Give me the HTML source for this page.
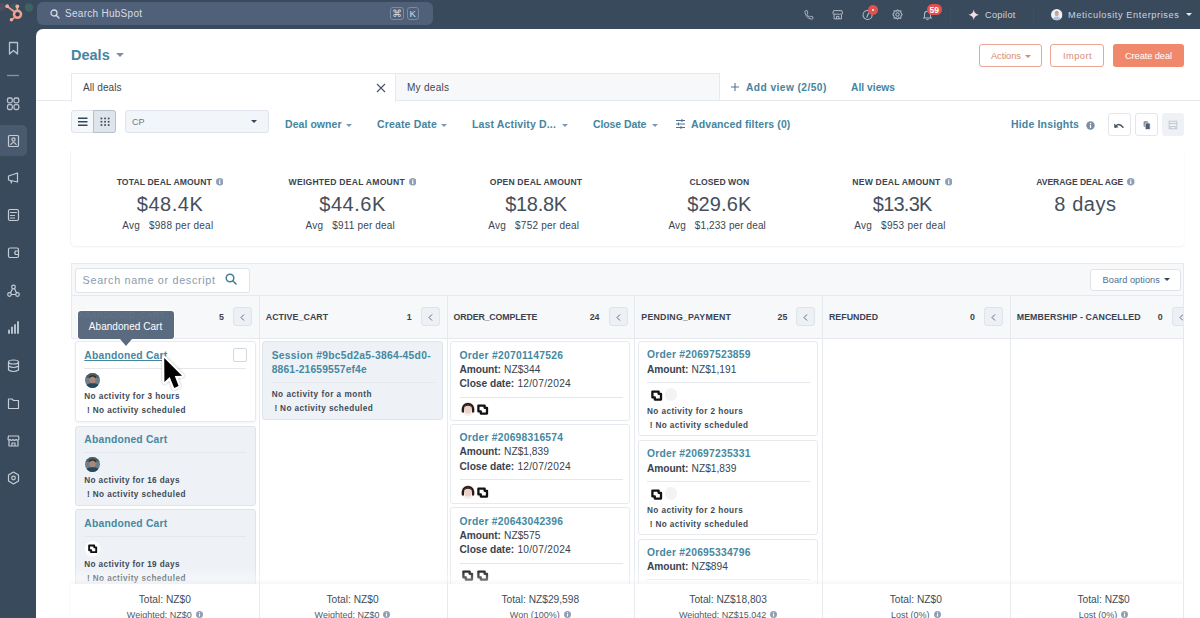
<!DOCTYPE html>
<html><head><meta charset="utf-8">
<style>
*{box-sizing:border-box;margin:0;padding:0}
html,body{width:1200px;height:618px;overflow:hidden}
body{background:#394a5d;font-family:"Liberation Sans",sans-serif;position:relative;color:#33475b}
.a{position:absolute;white-space:nowrap;line-height:1}
.b{position:absolute}
.lk{color:#4585a0;font-weight:bold}
.car{position:absolute;width:0;height:0;border-left:3px solid transparent;border-right:3px solid transparent;border-top:3px solid #7c98b6}
.ico{position:absolute;overflow:visible}
.hdr{font-weight:bold;font-size:8.8px;color:#33475b}
.card{position:absolute;border:1px solid #e3e8ee;border-radius:3px;background:#fff}
.card.g{background:#eef2f7;border-color:#dde4ec}
.ct{color:#3c7d96;font-weight:bold;font-size:10.3px}
.na{font-weight:bold;font-size:8.2px;color:#2e3f50}
.dv{position:absolute;height:1px;background:#dfe5eb}
.ft1{font-size:10.5px;color:#33475b}
.ft2{font-size:8.5px;color:#516f90}
</style></head>
<body>
<!-- ===== TOP BAR ===== -->
<svg class="ico" style="left:0;top:0" width="36" height="29" viewBox="0 0 36 29">
  <circle cx="1.5" cy="7" r="3.8" fill="rgba(160,100,120,0.22)"/><circle cx="14.5" cy="6.5" r="3.6" fill="rgba(90,130,100,0.22)"/><circle cx="29" cy="7.5" r="4.2" fill="rgba(70,130,100,0.45)"/>
  <g fill="none" stroke="#f0a08b" stroke-linecap="round">
    <circle cx="17.5" cy="14.3" r="3.5" stroke-width="2.6"/>
    <line x1="17.3" y1="10.5" x2="17.3" y2="6.5" stroke-width="1.8"/>
    <line x1="14.8" y1="12" x2="7.3" y2="6.5" stroke-width="1.6"/>
    <line x1="15" y1="17" x2="11.7" y2="19.8" stroke-width="1.6"/>
  </g>
  <g fill="#f3ad9a"><circle cx="17.3" cy="6.3" r="1.9"/><circle cx="7.2" cy="6.2" r="1.9"/><circle cx="11.4" cy="19.8" r="1.7"/></g>
  <circle cx="17.5" cy="14.3" r="1.6" fill="#2e3a48"/>
</svg>
<div class="b" style="left:37px;top:2px;width:396px;height:23px;background:#516079;border-radius:6px"></div>
<svg class="ico" style="left:50px;top:9px" width="10" height="10" viewBox="0 0 10 10"><circle cx="4" cy="4" r="3" fill="none" stroke="#d5dce5" stroke-width="1.3"/><line x1="6.2" y1="6.2" x2="9" y2="9" stroke="#d5dce5" stroke-width="1.4" stroke-linecap="round"/></svg>
<div class="a" id="t_search" style="letter-spacing:0.28px;left:65px;top:8.5px;font-size:10px;color:#d5dce5">Search HubSpot</div>
<div class="b" style="left:390px;top:7px;width:14px;height:13px;border:1px solid #7d8ba0;border-radius:3px"></div>
<div class="a" style="left:392px;top:8.5px;font-size:10px;color:#d5dce5">&#8984;</div>
<div class="b" style="left:407px;top:7px;width:12px;height:13px;border:1px solid #7d8ba0;border-radius:3px"></div>
<div class="a" style="left:409.5px;top:9px;font-size:9.5px;color:#d5dce5">K</div>

<!-- right icons -->
<svg class="ico" style="left:803px;top:8.5px" width="11.5" height="11.5" viewBox="0 0 14 14"><path d="M3 2 L5 2 L6 5 L4.6 6.2 Q6 9 8 10 L9.2 8.6 L12 9.6 L12 11.6 Q11.5 12.5 10 12.3 Q3.5 11 2.2 3.5 Q2.3 2.2 3 2Z" fill="none" stroke="#b3bdc8" stroke-width="1.1" stroke-linejoin="round"/></svg>
<svg class="ico" style="left:831.8px;top:8.5px" width="11.5" height="11.5" viewBox="0 0 14 14"><g fill="none" stroke="#b3bdc8" stroke-width="1.2"><path d="M2 2 H12 L13 5.5 Q12 7 10.5 6 Q9 7.2 7 6 Q5 7.2 3.5 6 Q2 7 1 5.5Z"/><path d="M2.5 6.5 V12 H11.5 V6.5"/><path d="M5.5 12 V9 H8.5 V12"/></g></svg>
<svg class="ico" style="left:861.5px;top:8.8px" width="12" height="12" viewBox="0 0 14 14"><circle cx="6.5" cy="7" r="5.3" fill="none" stroke="#b3bdc8" stroke-width="1.2"/><path d="M5.5 10 L8 4" stroke="#b3bdc8" stroke-width="1.3"/></svg>
<div class="b" style="left:868px;top:5px;width:10px;height:10px;border-radius:50%;background:#e2504f"></div>
<div class="b" style="left:871.8px;top:8.8px;width:2.4px;height:2.4px;border-radius:50%;background:#fff"></div>
<svg class="ico" style="left:892px;top:9px" width="11" height="11" viewBox="0 0 13 13"><g fill="none" stroke="#b3bdc8" stroke-width="1.2"><path d="M6.5 1 L8 2.5 L10.4 2.2 L10.6 4.6 L12 6.5 L10.6 8.4 L10.4 10.8 L8 10.5 L6.5 12 L5 10.5 L2.6 10.8 L2.4 8.4 L1 6.5 L2.4 4.6 L2.6 2.2 L5 2.5Z"/><circle cx="6.5" cy="6.5" r="2"/></g></svg>
<svg class="ico" style="left:921.5px;top:8.5px" width="11" height="12" viewBox="0 0 13 14"><g fill="none" stroke="#b3bdc8" stroke-width="1.2"><path d="M2 10.5 H11 L10 9 V6 Q10 2.5 6.5 2.5 Q3 2.5 3 6 V9Z"/><path d="M5.3 12 Q6.5 13.3 7.7 12"/></g></svg>
<div class="b" style="left:927px;top:4px;width:15px;height:11px;border-radius:6px;background:#e2504f"></div>
<div class="a" style="left:929.5px;top:5.5px;font-size:8.5px;color:#fff;font-weight:bold">59</div>
<div class="b" style="left:950px;top:6px;width:1px;height:17px;background:#404f61"></div>
<svg class="ico" style="left:968px;top:9px" width="11.5" height="11.5" viewBox="0 0 13 13"><path d="M6.5 0.5 Q7.2 5.6 12.5 6.5 Q7.2 7.4 6.5 12.5 Q5.8 7.4 0.5 6.5 Q5.8 5.6 6.5 0.5Z" fill="#f6dbe6"/></svg>
<div class="a" id="t_copilot" style="letter-spacing:0.30px;left:985px;top:10.5px;font-size:9.2px;color:#cdd5df">Copilot</div>
<div class="b" style="left:1033px;top:6px;width:1px;height:17px;background:#404f61"></div>
<svg class="ico" style="left:1050.5px;top:8.8px" width="11.5" height="11.5" viewBox="0 0 16 16"><defs><clipPath id="ca"><circle cx="8" cy="8" r="8"/></clipPath></defs><g clip-path="url(#ca)"><rect width="16" height="16" fill="#eef0f2"/><ellipse cx="8" cy="6.8" rx="2.8" ry="3.3" fill="#c9a898"/><path d="M5.2 5.5 Q8 2.8 10.8 5.5 Q10.5 3.2 8 3 Q5.5 3.2 5.2 5.5Z" fill="#8a7466"/><path d="M2.5 16 Q3 10.5 8 10.5 Q13 10.5 13.5 16Z" fill="#a9c4de"/></g></svg>
<div class="a" id="t_meti" style="letter-spacing:0.60px;left:1068px;top:10.5px;font-size:9.2px;color:#cdd5df">Meticulosity Enterprises</div>
<div class="car" style="left:1186px;top:13px;border-top-color:#e6ebf0;border-left-width:3.5px;border-right-width:3.5px;border-top-width:3.5px"></div>

<!-- ===== SIDEBAR ===== -->
<svg class="ico" style="left:0;top:29px" width="36" height="589" viewBox="0 29 36 589">
  <g fill="none" stroke="#b9c3ce" stroke-width="1.3" stroke-linejoin="round">
    <path d="M9.5 42.5 H17.5 V54 L13.5 50.5 L9.5 54Z"/>
    <line x1="7" y1="75.5" x2="19" y2="75.5" stroke="#8693a3"/>
    <rect x="7.5" y="98" width="4.8" height="4.8" rx="1.5"/><rect x="14" y="98" width="4.8" height="4.8" rx="1.5"/>
    <rect x="7.5" y="104.7" width="4.8" height="4.8" rx="1.5"/><rect x="14" y="104.7" width="4.8" height="4.8" rx="1.5"/>
  </g>
</svg>
<div class="b" style="left:0;top:125px;width:27px;height:31px;background:#4a5a6e;border-radius:0 5px 5px 0"></div>
<svg class="ico" style="left:0;top:29px" width="36" height="589" viewBox="0 29 36 589">
  <g fill="none" stroke="#c4ccd6" stroke-width="1.2" stroke-linejoin="round" stroke-linecap="round">
    <rect x="8.5" y="135.5" width="10" height="11" rx="1"/><circle cx="13.5" cy="139.5" r="1.6"/><path d="M10.8 144.5 Q13.5 140.5 16.2 144.5"/>
    <!-- megaphone -->
    <path d="M8.5 176 L17.5 173 V182 L8.5 180Z M10.5 180.5 L11.5 183"/>
    <!-- calc -->
    <rect x="8.5" y="209.5" width="10" height="11" rx="1.5"/><line x1="10.5" y1="212.5" x2="16.5" y2="212.5"/><path d="M10.5 215.5h1.5M13 215.5h1.5M10.5 218h1.5M13 218h1.5"/>
    <!-- wallet -->
    <rect x="8.5" y="248" width="10" height="9.5" rx="1.5"/><path d="M18.5 251 H15.5 Q14 252.8 15.5 254.5 H18.5"/>
    <!-- network -->
    <circle cx="13.5" cy="287" r="1.8"/><circle cx="9.5" cy="294.5" r="1.8"/><circle cx="17.5" cy="294.5" r="1.8"/><path d="M12.5 288.8 L10.5 292.8 M14.5 288.8 L16.5 292.8 M11.5 294.5 H15.5"/>
    <!-- bars -->
    <path d="M9 333 V330.5 M12 333 V327.5 M15 333 V325 M18 333 V322" stroke-width="1.8"/>
    <!-- db -->
    <ellipse cx="13.5" cy="362" rx="5" ry="2"/><path d="M8.5 362 V370 Q13.5 373 18.5 370 V362 M8.5 366 Q13.5 369 18.5 366"/>
    <!-- folder -->
    <path d="M8.5 399 H12 L13.5 400.5 H18.5 V408.5 H8.5Z"/>
    <!-- store -->
    <path d="M8.5 436 H18.5 L19 439 Q17.5 441 16 439.5 Q14.5 441 13 439.5 Q11.5 441 10 439.5 Q8.5 441 8 439Z M9 440.5 V446 H18 V440.5 M12 446 V443 H15 V446"/>
    <!-- gear-ish -->
    <path d="M13.5 472 L18.5 475 V481 L13.5 484 L8.5 481 V475Z"/><circle cx="13.5" cy="478" r="1.8"/>
  </g>
</svg>

<!-- ===== PANEL ===== -->
<div class="b" style="left:36px;top:29px;width:1164px;height:589px;background:#fff;border-top-left-radius:7px"></div>

<!-- Title -->
<div class="a lk" id="t_deals" style="left:71px;top:47.5px;font-size:14.5px">Deals</div>
<div class="car" style="left:116px;top:52.5px;border-left-width:4px;border-right-width:4px;border-top-width:4px;border-top-color:#7f8fa3"></div>

<!-- Buttons -->
<div class="b" style="left:979px;top:43.5px;width:63px;height:23px;border:1px solid #eba594;border-radius:3px"></div>
<div class="a" id="t_actions" style="margin-top:0.8px;letter-spacing:-0.10px;left:991px;top:51px;font-size:9.3px;color:#d98a76">Actions</div>
<div class="car" style="left:1025px;top:54.5px;border-top-color:#d98a76"></div>
<div class="b" style="left:1050px;top:43.5px;width:54px;height:23px;border:1px solid #eba594;border-radius:3px"></div>
<div class="a" id="t_import" style="margin-top:0.8px;letter-spacing:0.44px;left:1063px;top:51px;font-size:9.3px;color:#d98a76">Import</div>
<div class="b" style="left:1113px;top:44px;width:71px;height:22.5px;background:#f0896b;border-radius:3px"></div>
<div class="a" id="t_create" style="margin-top:0.8px;letter-spacing:-0.10px;left:1125px;top:51px;font-size:9.3px;color:#fff">Create deal</div>

<!-- Tabs -->
<div class="b" style="left:71px;top:72.5px;width:325px;height:29px;border:1px solid #e6e9ed;border-bottom:none;background:#fff"></div>
<div class="b" style="left:396px;top:72.5px;width:324px;height:28.5px;border:1px solid #e6e9ed;border-left:none;background:#f6f8fa"></div>
<div class="b" style="left:36px;top:100px;width:35px;height:1px;background:#e6e9ed"></div>
<div class="b" style="left:720px;top:100px;width:480px;height:1px;background:#e6e9ed"></div>
<div class="a" id="t_alldeals" style="letter-spacing:0.10px;left:83px;top:82.5px;font-size:10px;color:#3d4652">All deals</div>
<svg class="ico" style="left:376px;top:82.5px" width="10" height="10" viewBox="0 0 10 10"><path d="M1 1 L9 9 M9 1 L1 9" stroke="#4a5563" stroke-width="1.1"/></svg>
<div class="a" id="t_mydeals" style="letter-spacing:0.28px;left:407px;top:82.5px;font-size:10px;color:#3d4652">My deals</div>
<svg class="ico" style="left:730px;top:81.5px" width="10" height="10" viewBox="0 0 10 10"><path d="M5 1 V9 M1 5 H9" stroke="#5a7390" stroke-width="1.1"/></svg>
<div class="a lk" id="t_addview" style="letter-spacing:0.44px;left:746px;top:82.7px;font-size:10.2px">Add view (2/50)</div>
<div class="a lk" id="t_allviews" style="letter-spacing:0.05px;left:851px;top:82.7px;font-size:10.2px">All views</div>

<!-- Filters row -->
<div class="b" style="left:71px;top:110px;width:45px;height:22.5px;border:1px solid #dfe3eb;border-radius:3px;background:#f5f8fa"></div>
<div class="b" style="left:93px;top:110px;width:23px;height:22.5px;border:1px solid #b5c0cc;border-radius:0 3px 3px 0;background:#dfe5ed"></div>
<svg class="ico" style="left:77px;top:117px" width="12" height="10" viewBox="0 0 12 10"><path d="M1 1.2 H10.5 M1 4.7 H10.5 M1 8.2 H10.5" stroke="#33475b" stroke-width="1.4"/></svg>
<svg class="ico" style="left:99.5px;top:117px" width="12" height="10" viewBox="0 0 12 10"><g fill="#3d4a5a"><rect x="0.6" y="0.6" width="1.7" height="1.7"/><rect x="4.2" y="0.6" width="1.7" height="1.7"/><rect x="7.8" y="0.6" width="1.7" height="1.7"/><rect x="0.6" y="3.9" width="1.7" height="1.7"/><rect x="4.2" y="3.9" width="1.7" height="1.7"/><rect x="7.8" y="3.9" width="1.7" height="1.7"/><rect x="0.6" y="7.2" width="1.7" height="1.7"/><rect x="4.2" y="7.2" width="1.7" height="1.7"/><rect x="7.8" y="7.2" width="1.7" height="1.7"/></g></svg>
<div class="b" style="left:125px;top:110px;width:144px;height:22.5px;border:1px solid #dfe3eb;border-radius:3px;background:#f2f5f9"></div>
<div class="a" id="t_cp" style="left:132px;top:117.5px;font-size:9px;color:#6f7a86">CP</div>
<div class="car" style="left:251px;top:120px;border-top-color:#33475b"></div>

<div class="a lk" id="t_owner" style="letter-spacing:0.06px;left:285px;top:119px;font-size:10.5px">Deal owner</div>
<div class="car" style="left:346px;top:123.5px"></div>
<div class="a lk" id="t_cdate" style="letter-spacing:0.15px;left:377px;top:119px;font-size:10.5px">Create Date</div>
<div class="car" style="left:441px;top:123.5px"></div>
<div class="a lk" id="t_lastact" style="letter-spacing:0.15px;left:472px;top:119px;font-size:10.5px">Last Activity D...</div>
<div class="car" style="left:562px;top:123.5px"></div>
<div class="a lk" id="t_closedate" style="letter-spacing:-0.10px;left:593px;top:119px;font-size:10.5px">Close Date</div>
<div class="car" style="left:652px;top:123.5px"></div>
<svg class="ico" style="left:676px;top:119px" width="9" height="10" viewBox="0 0 9 10"><path d="M0 1.5 H9 M0 5 H9 M0 8.5 H9 M6 0 V3 M2.5 3.5 V6.5 M5 7 V10" stroke="#516f90" stroke-width="1"/></svg>
<div class="a lk" id="t_adv" style="letter-spacing:0.10px;left:691px;top:119px;font-size:10.5px">Advanced filters (0)</div>

<div class="a lk" id="t_hide" style="letter-spacing:0.17px;left:1011px;top:119px;font-size:10.5px">Hide Insights</div>
<svg class="ico" style="left:1086px;top:121px" width="9" height="9" viewBox="0 0 9 9"><circle cx="4.5" cy="4.5" r="4.2" fill="#7c8ea3"/><rect x="3.9" y="3.7" width="1.2" height="3.3" fill="#fff"/><circle cx="4.5" cy="2.5" r="0.7" fill="#fff"/></svg>
<div class="b" style="left:1108px;top:112.5px;width:23px;height:23px;border:1px solid #e3e6ea;border-radius:3px;background:#fff"></div>
<svg class="ico" style="left:1113px;top:121px" width="12" height="9" viewBox="0 0 12 9"><path d="M2.2 5.8 Q5.5 1.2 10 6.2" fill="none" stroke="#4a5566" stroke-width="1.5" stroke-linecap="round"/><path d="M1 2.6 L1.6 7 L5.6 6.3Z" fill="#4a5566"/></svg>
<div class="b" style="left:1135px;top:112.5px;width:23px;height:23px;border:1px solid #e3e6ea;border-radius:3px;background:#fff"></div>
<svg class="ico" style="left:1141px;top:120px" width="11" height="11" viewBox="0 0 11 11"><rect x="2.6" y="1.2" width="4.6" height="5.8" rx="1" fill="#7d8a9a"/><rect x="4.2" y="3" width="5" height="6.6" rx="1" fill="#4e6075" stroke="#fff" stroke-width="0.7"/></svg>
<div class="b" style="left:1162px;top:112.5px;width:22px;height:23px;border-radius:3px;background:#eef1f5"></div>
<svg class="ico" style="left:1168px;top:120px" width="10" height="10" viewBox="0 0 10 10"><path d="M1.2 1.2 H8.8 V8.8 H1.2Z M1.2 3.5 H8.8 M2.8 8.8 V6.5 H7.2 V8.8" fill="none" stroke="#c2cad3" stroke-width="1.1"/></svg>

<!-- ===== INSIGHTS ===== -->
<div class="b" style="left:71px;top:150px;width:1113px;height:96px;border-radius:4px;background:#fff;box-shadow:0 1px 2px rgba(45,62,80,0.07), -1px 0 1px rgba(45,62,80,0.04)"></div>
<div class="a" style="left:20.0px;top:178.02px;width:300px;text-align:center;font-size:8.6px;font-weight:bold;color:#3b4450"><span id="ins_l0" style="letter-spacing:0.124px;">TOTAL DEAL AMOUNT</span><span style="display:inline-block;width:4px"></span><svg width="7.5" height="7.5" viewBox="0 0 9 9" style="vertical-align:-0.5px"><circle cx="4.5" cy="4.5" r="4.5" fill="#8fa0b4"/><rect x="3.8" y="3.7" width="1.4" height="3.5" fill="#fff"/><circle cx="4.5" cy="2.3" r="0.85" fill="#fff"/></svg><span></span></div>
<div class="a" style="left:20.0px;top:194.37px;width:300px;text-align:center;font-size:20px;font-weight:normal;color:#454f5b"><span id="ins_v0" style="letter-spacing:0.522px;">$48.4K</span></div>
<div class="a" style="left:17.8px;top:221.13px;width:300px;text-align:center;font-size:10px;font-weight:normal;color:#3a4653"><span id="ins_a0" style="letter-spacing:0.251px;">Avg<span style="display:inline-block;width:9px"></span>$988 per deal</span></div>
<div class="a" style="left:202.5px;top:178.02px;width:300px;text-align:center;font-size:8.6px;font-weight:bold;color:#3b4450"><span id="ins_l1" style="letter-spacing:0.231px;">WEIGHTED DEAL AMOUNT</span><span style="display:inline-block;width:4px"></span><svg width="7.5" height="7.5" viewBox="0 0 9 9" style="vertical-align:-0.5px"><circle cx="4.5" cy="4.5" r="4.5" fill="#8fa0b4"/><rect x="3.8" y="3.7" width="1.4" height="3.5" fill="#fff"/><circle cx="4.5" cy="2.3" r="0.85" fill="#fff"/></svg><span></span></div>
<div class="a" style="left:202.5px;top:194.37px;width:300px;text-align:center;font-size:20px;font-weight:normal;color:#454f5b"><span id="ins_v1" style="letter-spacing:0.522px;">$44.6K</span></div>
<div class="a" style="left:200.3px;top:221.13px;width:300px;text-align:center;font-size:10px;font-weight:normal;color:#3a4653"><span id="ins_a1" style="letter-spacing:0.181px;">Avg<span style="display:inline-block;width:9px"></span>$911 per deal</span></div>
<div class="a" style="left:386.0px;top:178.02px;width:300px;text-align:center;font-size:8.6px;font-weight:bold;color:#3b4450"><span id="ins_l2" style="letter-spacing:0.162px;">OPEN DEAL AMOUNT</span></div>
<div class="a" style="left:386.0px;top:194.37px;width:300px;text-align:center;font-size:20px;font-weight:normal;color:#454f5b"><span id="ins_v2" style="letter-spacing:-0.278px;">$18.8K</span></div>
<div class="a" style="left:383.8px;top:221.13px;width:300px;text-align:center;font-size:10px;font-weight:normal;color:#3a4653"><span id="ins_a2" style="letter-spacing:0.238px;">Avg<span style="display:inline-block;width:9px"></span>$752 per deal</span></div>
<div class="a" style="left:569.4px;top:178.02px;width:300px;text-align:center;font-size:8.6px;font-weight:bold;color:#3b4450"><span id="ins_l3" style="letter-spacing:0.055px;">CLOSED WON</span></div>
<div class="a" style="left:569.4px;top:194.37px;width:300px;text-align:center;font-size:20px;font-weight:normal;color:#454f5b"><span id="ins_v3" style="letter-spacing:0.122px;">$29.6K</span></div>
<div class="a" style="left:567.2px;top:221.13px;width:300px;text-align:center;font-size:10px;font-weight:normal;color:#3a4653"><span id="ins_a3" style="letter-spacing:0.107px;">Avg<span style="display:inline-block;width:9px"></span>$1,233 per deal</span></div>
<div class="a" style="left:752.2px;top:178.02px;width:300px;text-align:center;font-size:8.6px;font-weight:bold;color:#3b4450"><span id="ins_l4" style="letter-spacing:0.181px;">NEW DEAL AMOUNT</span><span style="display:inline-block;width:4px"></span><svg width="7.5" height="7.5" viewBox="0 0 9 9" style="vertical-align:-0.5px"><circle cx="4.5" cy="4.5" r="4.5" fill="#8fa0b4"/><rect x="3.8" y="3.7" width="1.4" height="3.5" fill="#fff"/><circle cx="4.5" cy="2.3" r="0.85" fill="#fff"/></svg><span></span></div>
<div class="a" style="left:752.2px;top:194.37px;width:300px;text-align:center;font-size:20px;font-weight:normal;color:#454f5b"><span id="ins_v4" style="letter-spacing:-0.758px;">$13.3K</span></div>
<div class="a" style="left:750.0px;top:221.13px;width:300px;text-align:center;font-size:10px;font-weight:normal;color:#3a4653"><span id="ins_a4" style="letter-spacing:0.271px;">Avg<span style="display:inline-block;width:9px"></span>$953 per deal</span></div>
<div class="a" style="left:935.5px;top:178.02px;width:300px;text-align:center;font-size:8.6px;font-weight:bold;color:#3b4450"><span id="ins_l5" style="letter-spacing:-0.079px;">AVERAGE DEAL AGE</span><span style="display:inline-block;width:4px"></span><svg width="7.5" height="7.5" viewBox="0 0 9 9" style="vertical-align:-0.5px"><circle cx="4.5" cy="4.5" r="4.5" fill="#8fa0b4"/><rect x="3.8" y="3.7" width="1.4" height="3.5" fill="#fff"/><circle cx="4.5" cy="2.3" r="0.85" fill="#fff"/></svg><span></span></div>
<div class="a" style="left:935.5px;top:194.37px;width:300px;text-align:center;font-size:20px;font-weight:normal;color:#454f5b"><span id="ins_v5" style="letter-spacing:0.572px;">8 days</span></div>
<div style="position:absolute;left:0;top:0;width:1184px;height:618px;overflow:hidden">
<div class="b" style="left:71.0px;top:263.0px;width:1113.0px;height:355.0px;background:#f6f8fa;border:1px solid #e8ebef;border-bottom:none"></div>
<div class="b" style="left:72.0px;top:295.0px;width:1112.0px;height:1.0px;background:#e6eaee"></div>
<div class="b" style="left:75.0px;top:267.5px;width:175.0px;height:25.0px;background:#fff;border:1px solid #dfe3eb;border-radius:3px"></div>
<div class="a" id="b_search" style="left:82.6px;top:274.86px;font-size:10.8px;font-weight:normal;color:#8a9bb0;letter-spacing:0.672px;">Search name or descript</div>
<svg class="ico" style="left:225px;top:273px" width="12" height="12" viewBox="0 0 12 12"><circle cx="5" cy="5" r="3.8" fill="none" stroke="#3f8097" stroke-width="1.5"/><line x1="7.8" y1="7.8" x2="11" y2="11" stroke="#3f8097" stroke-width="1.6" stroke-linecap="round"/></svg>
<div class="b" style="left:1090.0px;top:268.5px;width:90.5px;height:22.5px;background:#fff;border:1px solid #dfe3eb;border-radius:3px"></div>
<div class="a" id="b_opts" style="left:1102.6px;top:275.51px;font-size:9.2px;font-weight:normal;color:#516f90;letter-spacing:0.041px;">Board options</div>
<div class="car" style="left:1164px;top:278px;border-top-color:#33475b"></div>
<div class="b" style="left:71px;top:338px;width:1113px;height:280px;background:#fff"></div>
<div class="b" style="left:72.0px;top:338.0px;width:1112.0px;height:1.0px;background:#e6eaee"></div>
<div class="a" id="h0" style="left:78.0px;top:312.95px;font-size:8.8px;font-weight:bold;color:#3b4350;letter-spacing:0.000px;">ABANDONED_CART</div>
<div class="b" style="left:233.0px;top:307.0px;width:19.0px;height:19.0px;background:#edf0f4;border:1px solid #dfe4ea;border-radius:3px"></div>
<svg class="ico" style="left:240.0px;top:313.5px" width="5" height="7" viewBox="0 0 5 7"><path d="M4 0.5 L1 3.5 L4 6.5" fill="none" stroke="#5b6b7c" stroke-width="1"/></svg>
<div class="a" style="left:175.0px;width:49.0px;text-align:right;top:312.95px;font-size:8.8px;font-weight:bold;color:#3b4350">5</div>
<div class="b" style="left:258.7px;top:295.0px;width:1.0px;height:323.0px;background:#e6eaee"></div>
<div class="a" id="h1" style="left:265.7px;top:312.95px;font-size:8.8px;font-weight:bold;color:#3b4350;letter-spacing:0.091px;">ACTIVE_CART</div>
<div class="b" style="left:420.7px;top:307.0px;width:19.0px;height:19.0px;background:#edf0f4;border:1px solid #dfe4ea;border-radius:3px"></div>
<svg class="ico" style="left:427.7px;top:313.5px" width="5" height="7" viewBox="0 0 5 7"><path d="M4 0.5 L1 3.5 L4 6.5" fill="none" stroke="#5b6b7c" stroke-width="1"/></svg>
<div class="a" style="left:362.7px;width:49.0px;text-align:right;top:312.95px;font-size:8.8px;font-weight:bold;color:#3b4350">1</div>
<div class="b" style="left:446.5px;top:295.0px;width:1.0px;height:323.0px;background:#e6eaee"></div>
<div class="a" id="h2" style="left:453.5px;top:312.95px;font-size:8.8px;font-weight:bold;color:#3b4350;letter-spacing:-0.134px;">ORDER_COMPLETE</div>
<div class="b" style="left:608.5px;top:307.0px;width:19.0px;height:19.0px;background:#edf0f4;border:1px solid #dfe4ea;border-radius:3px"></div>
<svg class="ico" style="left:615.5px;top:313.5px" width="5" height="7" viewBox="0 0 5 7"><path d="M4 0.5 L1 3.5 L4 6.5" fill="none" stroke="#5b6b7c" stroke-width="1"/></svg>
<div class="a" style="left:550.5px;width:49.0px;text-align:right;top:312.95px;font-size:8.8px;font-weight:bold;color:#3b4350">24</div>
<div class="b" style="left:634.3px;top:295.0px;width:1.0px;height:323.0px;background:#e6eaee"></div>
<div class="a" id="h3" style="left:641.3px;top:312.95px;font-size:8.8px;font-weight:bold;color:#3b4350;letter-spacing:0.226px;">PENDING_PAYMENT</div>
<div class="b" style="left:796.3px;top:307.0px;width:19.0px;height:19.0px;background:#edf0f4;border:1px solid #dfe4ea;border-radius:3px"></div>
<svg class="ico" style="left:803.3px;top:313.5px" width="5" height="7" viewBox="0 0 5 7"><path d="M4 0.5 L1 3.5 L4 6.5" fill="none" stroke="#5b6b7c" stroke-width="1"/></svg>
<div class="a" style="left:738.3px;width:49.0px;text-align:right;top:312.95px;font-size:8.8px;font-weight:bold;color:#3b4350">25</div>
<div class="b" style="left:822.0px;top:295.0px;width:1.0px;height:323.0px;background:#e6eaee"></div>
<div class="a" id="h4" style="left:829.0px;top:312.95px;font-size:8.8px;font-weight:bold;color:#3b4350;letter-spacing:0.018px;">REFUNDED</div>
<div class="b" style="left:984.0px;top:307.0px;width:19.0px;height:19.0px;background:#edf0f4;border:1px solid #dfe4ea;border-radius:3px"></div>
<svg class="ico" style="left:991.0px;top:313.5px" width="5" height="7" viewBox="0 0 5 7"><path d="M4 0.5 L1 3.5 L4 6.5" fill="none" stroke="#5b6b7c" stroke-width="1"/></svg>
<div class="a" style="left:926.0px;width:49.0px;text-align:right;top:312.95px;font-size:8.8px;font-weight:bold;color:#3b4350">0</div>
<div class="b" style="left:1009.7px;top:295.0px;width:1.0px;height:323.0px;background:#e6eaee"></div>
<div class="a" id="h5" style="left:1016.7px;top:312.95px;font-size:8.8px;font-weight:bold;color:#3b4350;letter-spacing:0.117px;">MEMBERSHIP - CANCELLED</div>
<div class="b" style="left:1171.7px;top:307.0px;width:19.0px;height:19.0px;background:#edf0f4;border:1px solid #dfe4ea;border-radius:3px"></div>
<svg class="ico" style="left:1178.7px;top:313.5px" width="5" height="7" viewBox="0 0 5 7"><path d="M4 0.5 L1 3.5 L4 6.5" fill="none" stroke="#5b6b7c" stroke-width="1"/></svg>
<div class="a" style="left:1113.7px;width:49.0px;text-align:right;top:312.95px;font-size:8.8px;font-weight:bold;color:#3b4350">0</div>
<div class="b" style="left:74.5px;top:341.3px;width:181.5px;height:80.5px;background:#fff;border:1px solid #e6eaef;border-radius:3px;box-shadow:0 1px 3px rgba(0,0,0,0.06)"></div>
<div class="a" id="c0t0" style="left:84.3px;top:350.78px;font-size:10.3px;font-weight:bold;color:#4688a0;letter-spacing:0.216px;text-decoration:underline;text-underline-offset:1px">Abandoned Cart</div>
<div class="b" style="left:84.3px;top:368.0px;width:162.0px;height:1.0px;background:#e4e8ec"></div>
<svg class="ico" style="left:85.1px;top:373.0px" width="15" height="15" viewBox="0 0 16 16"><defs><clipPath id="cm"><circle cx="8" cy="8" r="8"/></clipPath></defs><g clip-path="url(#cm)"><rect width="16" height="16" fill="#6f7f88"/><rect y="0" width="16" height="5" fill="#4e5c63"/><ellipse cx="8" cy="7.2" rx="3.4" ry="3.9" fill="#a7887a"/><path d="M4.4 5.8 Q8 1.6 11.6 5.8 L11.6 3.8 Q8 1.2 4.4 3.8Z" fill="#2e2a26"/><path d="M0 16 Q0.5 10.8 8 11 Q15.5 10.8 16 16Z" fill="#24495a"/></g></svg>
<div class="a" id="c0n0a" style="left:84.3px;top:393.16px;font-size:8.2px;font-weight:bold;color:#404a56;letter-spacing:0.398px;">No activity for 3 hours</div>
<div class="a" id="c0n0x" style="left:87.1px;top:407.16px;font-size:8.2px;font-weight:bold;color:#404a56;letter-spacing:0.000px;">!</div>
<div class="a" id="c0n0b" style="left:92.7px;top:407.16px;font-size:8.2px;font-weight:bold;color:#404a56;letter-spacing:0.426px;">No activity scheduled</div>
<div class="b" style="left:74.5px;top:425.5px;width:181.5px;height:80.5px;background:#eef2f7;border:1px solid #dde4ec;border-radius:3px;"></div>
<div class="a" id="c0t1" style="left:84.3px;top:434.98px;font-size:10.3px;font-weight:bold;color:#4688a0;letter-spacing:0.216px;">Abandoned Cart</div>
<div class="b" style="left:84.3px;top:452.0px;width:162.0px;height:1.0px;background:#e4e8ec"></div>
<svg class="ico" style="left:85.1px;top:457.2px" width="15" height="15" viewBox="0 0 16 16"><defs><clipPath id="cm"><circle cx="8" cy="8" r="8"/></clipPath></defs><g clip-path="url(#cm)"><rect width="16" height="16" fill="#6f7f88"/><rect y="0" width="16" height="5" fill="#4e5c63"/><ellipse cx="8" cy="7.2" rx="3.4" ry="3.9" fill="#a7887a"/><path d="M4.4 5.8 Q8 1.6 11.6 5.8 L11.6 3.8 Q8 1.2 4.4 3.8Z" fill="#2e2a26"/><path d="M0 16 Q0.5 10.8 8 11 Q15.5 10.8 16 16Z" fill="#24495a"/></g></svg>
<div class="a" id="c0n1a" style="left:84.3px;top:477.36px;font-size:8.2px;font-weight:bold;color:#404a56;letter-spacing:0.376px;">No activity for 16 days</div>
<div class="a" id="c0n1x" style="left:87.1px;top:491.36px;font-size:8.2px;font-weight:bold;color:#404a56;letter-spacing:0.000px;">!</div>
<div class="a" id="c0n1b" style="left:92.7px;top:491.36px;font-size:8.2px;font-weight:bold;color:#404a56;letter-spacing:0.426px;">No activity scheduled</div>
<div class="b" style="left:74.5px;top:509.4px;width:181.5px;height:80.5px;background:#eef2f7;border:1px solid #dde4ec;border-radius:3px;"></div>
<div class="a" id="c0t2" style="left:84.3px;top:518.88px;font-size:10.3px;font-weight:bold;color:#4688a0;letter-spacing:0.216px;">Abandoned Cart</div>
<div class="b" style="left:84.3px;top:536.0px;width:162.0px;height:1.0px;background:#e4e8ec"></div>
<svg class="ico" style="left:85.1px;top:541.1px" width="15.5" height="15.5" viewBox="0 0 16 16"><circle cx="8" cy="8" r="8" fill="#fff"/><g transform="translate(8 8) scale(0.85) translate(-6.8 -6.5)"><path d="M2.4 2.6 H8.6 V4.8 H11 V10.6 H4.8 V8.4 H2.4Z" fill="none" stroke="#111" stroke-width="2.3" stroke-linejoin="round"/></g></svg>
<div class="a" id="c0n2a" style="left:84.3px;top:561.26px;font-size:8.2px;font-weight:bold;color:#404a56;letter-spacing:0.376px;">No activity for 19 days</div>
<div class="a" id="c0n2x" style="left:87.1px;top:575.26px;font-size:8.2px;font-weight:bold;color:#404a56;letter-spacing:0.000px;">!</div>
<div class="a" id="c0n2b" style="left:92.7px;top:575.26px;font-size:8.2px;font-weight:bold;color:#404a56;letter-spacing:0.426px;">No activity scheduled</div>
<div class="b" style="left:233.0px;top:348.3px;width:14.0px;height:13.5px;background:#fff;border:1px solid #d3d8de;border-radius:2px"></div>
<div class="b" style="left:262.2px;top:341.3px;width:181.0px;height:78.3px;background:#eef2f7;border:1px solid #dde4ec;border-radius:3px;"></div>
<div class="a" id="c1t0" style="left:271.7px;top:350.78px;font-size:10.3px;font-weight:bold;color:#4688a0;letter-spacing:0.267px;">Session #9bc5d2a5-3864-45d0-</div>
<div class="a" id="c1t1" style="left:271.7px;top:365.18px;font-size:10.3px;font-weight:bold;color:#4688a0;letter-spacing:0.140px;">8861-21659557ef4e</div>
<div class="b" style="left:271.7px;top:382.0px;width:163.0px;height:1.0px;background:#e4e8ec"></div>
<div class="a" id="c1na" style="left:271.7px;top:390.56px;font-size:8.2px;font-weight:bold;color:#404a56;letter-spacing:0.504px;">No activity for a month</div>
<div class="a" id="c1nx" style="left:274.5px;top:404.76px;font-size:8.2px;font-weight:bold;color:#404a56;letter-spacing:0.000px;">!</div>
<div class="a" id="c1nb" style="left:280.1px;top:404.76px;font-size:8.2px;font-weight:bold;color:#404a56;letter-spacing:0.426px;">No activity scheduled</div>
<div class="b" style="left:450.3px;top:341.3px;width:180.2px;height:79.9px;background:#fff;border:1px solid #e6eaef;border-radius:3px;"></div>
<div class="a" id="c2t0" style="left:459.5px;top:350.58px;font-size:10.3px;font-weight:bold;color:#4688a0;letter-spacing:0.261px;">Order #20701147526</div>
<div class="a" id="c2a0" style="left:459.5px;top:364.67px;font-size:10.2px;font-weight:bold;color:#39434f;letter-spacing:-0.079px;">Amount:</div>
<div class="a" id="c2av0" style="left:504.1px;top:364.67px;font-size:10.2px;font-weight:normal;color:#39434f;letter-spacing:0.000px;">NZ$344</div>
<div class="a" id="c2c0" style="left:459.5px;top:378.97px;font-size:10.2px;font-weight:bold;color:#39434f;letter-spacing:-0.022px;">Close date:</div>
<div class="a" id="c2cv0" style="left:517.4px;top:378.97px;font-size:10.2px;font-weight:normal;color:#39434f;letter-spacing:0.267px;">12/07/2024</div>
<div class="b" style="left:459.5px;top:397.0px;width:163.0px;height:1.0px;background:#e4e8ec"></div>
<svg class="ico" style="left:461.0px;top:402.3px" width="14" height="14" viewBox="0 0 16 16"><defs><clipPath id="cw"><circle cx="8" cy="8" r="8"/></clipPath></defs><g clip-path="url(#cw)"><rect width="16" height="16" fill="#f6efec"/><path d="M0.5 12 Q0 1 8 0.8 Q16 1 15.5 12 L12.6 12 Q13 5 8 4.2 Q3 5 3.4 12Z" fill="#2a1a18"/><ellipse cx="8" cy="8.2" rx="4.4" ry="5" fill="#ead2c8"/><path d="M3.8 5.6 Q8 2.8 12.2 5.6 Q11.5 3.4 8 3.2 Q4.5 3.4 3.8 5.6Z" fill="#2a1a18"/></g></svg>
<svg class="ico" style="left:475.5px;top:402.8px" width="13" height="13" viewBox="0 0 13 13"><path d="M2.4 2.6 H8.6 V4.8 H11 V10.6 H4.8 V8.4 H2.4Z" fill="none" stroke="#111" stroke-width="2.3" stroke-linejoin="round"/></svg>
<div class="b" style="left:450.3px;top:424.1px;width:180.2px;height:79.9px;background:#fff;border:1px solid #e6eaef;border-radius:3px;"></div>
<div class="a" id="c2t1" style="left:459.5px;top:433.38px;font-size:10.3px;font-weight:bold;color:#4688a0;letter-spacing:0.228px;">Order #20698316574</div>
<div class="a" id="c2a1" style="left:459.5px;top:447.47px;font-size:10.2px;font-weight:bold;color:#39434f;letter-spacing:-0.079px;">Amount:</div>
<div class="a" id="c2av1" style="left:504.1px;top:447.47px;font-size:10.2px;font-weight:normal;color:#39434f;letter-spacing:0.000px;">NZ$1,839</div>
<div class="a" id="c2c1" style="left:459.5px;top:461.77px;font-size:10.2px;font-weight:bold;color:#39434f;letter-spacing:-0.022px;">Close date:</div>
<div class="a" id="c2cv1" style="left:517.4px;top:461.77px;font-size:10.2px;font-weight:normal;color:#39434f;letter-spacing:0.267px;">12/07/2024</div>
<div class="b" style="left:459.5px;top:479.0px;width:163.0px;height:1.0px;background:#e4e8ec"></div>
<svg class="ico" style="left:461.0px;top:485.1px" width="14" height="14" viewBox="0 0 16 16"><defs><clipPath id="cw"><circle cx="8" cy="8" r="8"/></clipPath></defs><g clip-path="url(#cw)"><rect width="16" height="16" fill="#f6efec"/><path d="M0.5 12 Q0 1 8 0.8 Q16 1 15.5 12 L12.6 12 Q13 5 8 4.2 Q3 5 3.4 12Z" fill="#2a1a18"/><ellipse cx="8" cy="8.2" rx="4.4" ry="5" fill="#ead2c8"/><path d="M3.8 5.6 Q8 2.8 12.2 5.6 Q11.5 3.4 8 3.2 Q4.5 3.4 3.8 5.6Z" fill="#2a1a18"/></g></svg>
<svg class="ico" style="left:475.5px;top:485.6px" width="13" height="13" viewBox="0 0 13 13"><path d="M2.4 2.6 H8.6 V4.8 H11 V10.6 H4.8 V8.4 H2.4Z" fill="none" stroke="#111" stroke-width="2.3" stroke-linejoin="round"/></svg>
<div class="b" style="left:450.3px;top:507.4px;width:180.2px;height:79.9px;background:#fff;border:1px solid #e6eaef;border-radius:3px;"></div>
<div class="a" id="c2t2" style="left:459.5px;top:516.68px;font-size:10.3px;font-weight:bold;color:#4688a0;letter-spacing:0.228px;">Order #20643042396</div>
<div class="a" id="c2a2" style="left:459.5px;top:530.77px;font-size:10.2px;font-weight:bold;color:#39434f;letter-spacing:-0.079px;">Amount:</div>
<div class="a" id="c2av2" style="left:504.1px;top:530.77px;font-size:10.2px;font-weight:normal;color:#39434f;letter-spacing:0.000px;">NZ$575</div>
<div class="a" id="c2c2" style="left:459.5px;top:545.07px;font-size:10.2px;font-weight:bold;color:#39434f;letter-spacing:-0.022px;">Close date:</div>
<div class="a" id="c2cv2" style="left:517.4px;top:545.07px;font-size:10.2px;font-weight:normal;color:#39434f;letter-spacing:0.267px;">10/07/2024</div>
<div class="b" style="left:459.5px;top:563.0px;width:163.0px;height:1.0px;background:#e4e8ec"></div>
<svg class="ico" style="left:461.3px;top:569.4px" width="13" height="13" viewBox="0 0 13 13"><path d="M2.4 2.6 H8.6 V4.8 H11 V10.6 H4.8 V8.4 H2.4Z" fill="none" stroke="#111" stroke-width="2.3" stroke-linejoin="round"/></svg>
<svg class="ico" style="left:475.5px;top:569.4px" width="13" height="13" viewBox="0 0 13 13"><path d="M2.4 2.6 H8.6 V4.8 H11 V10.6 H4.8 V8.4 H2.4Z" fill="none" stroke="#111" stroke-width="2.3" stroke-linejoin="round"/></svg>
<div class="b" style="left:638.0px;top:341.3px;width:180.0px;height:95.1px;background:#fff;border:1px solid #e6eaef;border-radius:3px;"></div>
<div class="a" id="c3t0" style="left:647.0px;top:350.38px;font-size:10.3px;font-weight:bold;color:#4688a0;letter-spacing:0.228px;">Order #20697523859</div>
<div class="a" id="c3a0" style="left:647.0px;top:364.67px;font-size:10.2px;font-weight:bold;color:#39434f;letter-spacing:-0.079px;">Amount:</div>
<div class="a" id="c3av0" style="left:691.6px;top:364.67px;font-size:10.2px;font-weight:normal;color:#39434f;letter-spacing:0.000px;">NZ$1,191</div>
<div class="b" style="left:647.0px;top:382.0px;width:163.0px;height:1.0px;background:#e4e8ec"></div>
<svg class="ico" style="left:649.5px;top:388.8px" width="13" height="13" viewBox="0 0 13 13"><path d="M2.4 2.6 H8.6 V4.8 H11 V10.6 H4.8 V8.4 H2.4Z" fill="none" stroke="#111" stroke-width="2.3" stroke-linejoin="round"/></svg>
<div class="b" style="left:664.5px;top:388.3px;width:12.5px;height:12.5px;border-radius:50%;background:#f2f3f5;filter:blur(0.6px)"></div>
<div class="a" id="c3n0a" style="left:647.0px;top:407.96px;font-size:8.2px;font-weight:bold;color:#404a56;letter-spacing:0.420px;">No activity for 2 hours</div>
<div class="a" id="c3n0x" style="left:649.8px;top:421.96px;font-size:8.2px;font-weight:bold;color:#404a56;letter-spacing:0.000px;">!</div>
<div class="a" id="c3n0b" style="left:655.4px;top:421.96px;font-size:8.2px;font-weight:bold;color:#404a56;letter-spacing:0.426px;">No activity scheduled</div>
<div class="b" style="left:638.0px;top:440.4px;width:180.0px;height:95.1px;background:#fff;border:1px solid #e6eaef;border-radius:3px;"></div>
<div class="a" id="c3t1" style="left:647.0px;top:449.48px;font-size:10.3px;font-weight:bold;color:#4688a0;letter-spacing:0.228px;">Order #20697235331</div>
<div class="a" id="c3a1" style="left:647.0px;top:463.77px;font-size:10.2px;font-weight:bold;color:#39434f;letter-spacing:-0.079px;">Amount:</div>
<div class="a" id="c3av1" style="left:691.6px;top:463.77px;font-size:10.2px;font-weight:normal;color:#39434f;letter-spacing:0.000px;">NZ$1,839</div>
<div class="b" style="left:647.0px;top:481.0px;width:163.0px;height:1.0px;background:#e4e8ec"></div>
<svg class="ico" style="left:649.5px;top:487.9px" width="13" height="13" viewBox="0 0 13 13"><path d="M2.4 2.6 H8.6 V4.8 H11 V10.6 H4.8 V8.4 H2.4Z" fill="none" stroke="#111" stroke-width="2.3" stroke-linejoin="round"/></svg>
<div class="b" style="left:664.5px;top:487.4px;width:12.5px;height:12.5px;border-radius:50%;background:#f2f3f5;filter:blur(0.6px)"></div>
<div class="a" id="c3n1a" style="left:647.0px;top:507.06px;font-size:8.2px;font-weight:bold;color:#404a56;letter-spacing:0.420px;">No activity for 2 hours</div>
<div class="a" id="c3n1x" style="left:649.8px;top:521.06px;font-size:8.2px;font-weight:bold;color:#404a56;letter-spacing:0.000px;">!</div>
<div class="a" id="c3n1b" style="left:655.4px;top:521.06px;font-size:8.2px;font-weight:bold;color:#404a56;letter-spacing:0.426px;">No activity scheduled</div>
<div class="b" style="left:638.0px;top:538.6px;width:180.0px;height:95.1px;background:#fff;border:1px solid #e6eaef;border-radius:3px;"></div>
<div class="a" id="c3t2" style="left:647.0px;top:547.68px;font-size:10.3px;font-weight:bold;color:#4688a0;letter-spacing:0.228px;">Order #20695334796</div>
<div class="a" id="c3a2" style="left:647.0px;top:561.97px;font-size:10.2px;font-weight:bold;color:#39434f;letter-spacing:-0.079px;">Amount:</div>
<div class="a" id="c3av2" style="left:691.6px;top:561.97px;font-size:10.2px;font-weight:normal;color:#39434f;letter-spacing:0.000px;">NZ$894</div>
<div class="b" style="left:647.0px;top:579.0px;width:163.0px;height:1.0px;background:#e4e8ec"></div>
<div class="b" style="left:71.0px;top:568.0px;width:1113.0px;height:16.0px;background:linear-gradient(rgba(255,255,255,0),rgba(255,255,255,0.55))"></div>
<div class="b" style="left:71.0px;top:583.5px;width:1113.0px;height:35.0px;background:#fff;box-shadow:0 -2px 4px rgba(45,62,80,0.05)"></div>
<div class="a" style="left:14.8px;top:594.57px;width:300px;text-align:center;font-size:10.2px;font-weight:normal;color:#414c58"><span id="f0a" style="letter-spacing:0.000px;">Total: NZ$0</span></div>
<div class="a" style="left:14.8px;top:610.88px;width:300px;text-align:center;font-size:9px;font-weight:normal;color:#4f5a66"><span id="f0b" style="letter-spacing:0.000px;">Weighted: NZ$0<svg width="7" height="7" viewBox="0 0 9 9" style="vertical-align:-0.5px;margin-left:4px"><circle cx="4.5" cy="4.5" r="4.5" fill="#8fa0b4"/><rect x="3.8" y="3.7" width="1.4" height="3.5" fill="#fff"/><circle cx="4.5" cy="2.3" r="0.85" fill="#fff"/></svg></span></div>
<div class="b" style="left:258.7px;top:583.5px;width:1.0px;height:35.0px;background:#e6eaee"></div>
<div class="a" style="left:202.5px;top:594.57px;width:300px;text-align:center;font-size:10.2px;font-weight:normal;color:#414c58"><span id="f1a" style="letter-spacing:0.000px;">Total: NZ$0</span></div>
<div class="a" style="left:202.5px;top:610.88px;width:300px;text-align:center;font-size:9px;font-weight:normal;color:#4f5a66"><span id="f1b" style="letter-spacing:0.000px;">Weighted: NZ$0<svg width="7" height="7" viewBox="0 0 9 9" style="vertical-align:-0.5px;margin-left:4px"><circle cx="4.5" cy="4.5" r="4.5" fill="#8fa0b4"/><rect x="3.8" y="3.7" width="1.4" height="3.5" fill="#fff"/><circle cx="4.5" cy="2.3" r="0.85" fill="#fff"/></svg></span></div>
<div class="b" style="left:446.5px;top:583.5px;width:1.0px;height:35.0px;background:#e6eaee"></div>
<div class="a" style="left:390.3px;top:594.57px;width:300px;text-align:center;font-size:10.2px;font-weight:normal;color:#414c58"><span id="f2a" style="letter-spacing:0.000px;">Total: NZ$29,598</span></div>
<div class="a" style="left:390.3px;top:610.88px;width:300px;text-align:center;font-size:9px;font-weight:normal;color:#4f5a66"><span id="f2b" style="letter-spacing:0.000px;">Won (100%)<svg width="7" height="7" viewBox="0 0 9 9" style="vertical-align:-0.5px;margin-left:4px"><circle cx="4.5" cy="4.5" r="4.5" fill="#8fa0b4"/><rect x="3.8" y="3.7" width="1.4" height="3.5" fill="#fff"/><circle cx="4.5" cy="2.3" r="0.85" fill="#fff"/></svg></span></div>
<div class="b" style="left:634.3px;top:583.5px;width:1.0px;height:35.0px;background:#e6eaee"></div>
<div class="a" style="left:578.1px;top:594.57px;width:300px;text-align:center;font-size:10.2px;font-weight:normal;color:#414c58"><span id="f3a" style="letter-spacing:0.000px;">Total: NZ$18,803</span></div>
<div class="a" style="left:578.1px;top:610.88px;width:300px;text-align:center;font-size:9px;font-weight:normal;color:#4f5a66"><span id="f3b" style="letter-spacing:0.000px;">Weighted: NZ$15,042<svg width="7" height="7" viewBox="0 0 9 9" style="vertical-align:-0.5px;margin-left:4px"><circle cx="4.5" cy="4.5" r="4.5" fill="#8fa0b4"/><rect x="3.8" y="3.7" width="1.4" height="3.5" fill="#fff"/><circle cx="4.5" cy="2.3" r="0.85" fill="#fff"/></svg></span></div>
<div class="b" style="left:822.0px;top:583.5px;width:1.0px;height:35.0px;background:#e6eaee"></div>
<div class="a" style="left:765.8px;top:594.57px;width:300px;text-align:center;font-size:10.2px;font-weight:normal;color:#414c58"><span id="f4a" style="letter-spacing:0.000px;">Total: NZ$0</span></div>
<div class="a" style="left:765.8px;top:610.88px;width:300px;text-align:center;font-size:9px;font-weight:normal;color:#4f5a66"><span id="f4b" style="letter-spacing:0.000px;">Lost (0%)<svg width="7" height="7" viewBox="0 0 9 9" style="vertical-align:-0.5px;margin-left:4px"><circle cx="4.5" cy="4.5" r="4.5" fill="#8fa0b4"/><rect x="3.8" y="3.7" width="1.4" height="3.5" fill="#fff"/><circle cx="4.5" cy="2.3" r="0.85" fill="#fff"/></svg></span></div>
<div class="b" style="left:1009.7px;top:583.5px;width:1.0px;height:35.0px;background:#e6eaee"></div>
<div class="a" style="left:953.5px;top:594.57px;width:300px;text-align:center;font-size:10.2px;font-weight:normal;color:#414c58"><span id="f5a" style="letter-spacing:0.000px;">Total: NZ$0</span></div>
<div class="a" style="left:953.5px;top:610.88px;width:300px;text-align:center;font-size:9px;font-weight:normal;color:#4f5a66"><span id="f5b" style="letter-spacing:0.000px;">Lost (0%)<svg width="7" height="7" viewBox="0 0 9 9" style="vertical-align:-0.5px;margin-left:4px"><circle cx="4.5" cy="4.5" r="4.5" fill="#8fa0b4"/><rect x="3.8" y="3.7" width="1.4" height="3.5" fill="#fff"/><circle cx="4.5" cy="2.3" r="0.85" fill="#fff"/></svg></span></div>
<div class="b" style="left:1183.0px;top:263.0px;width:1.0px;height:355.0px;background:#e6e9ee;box-shadow:1px 0 2px rgba(45,62,80,0.06)"></div>
<div class="b" style="left:77.6px;top:311.0px;width:96.5px;height:28.0px;background:#5a6b80;border-radius:3px;box-shadow:0 0 0 1px rgba(255,255,255,0.9)"></div>
<div class="a" id="tipghost" style="left:78.0px;top:311.05px;font-size:8.8px;font-weight:bold;color:rgba(150,160,175,0.12);letter-spacing:0.000px;">ABANDONED_CART</div>
<div class="b" style="left:119.5px;top:338.8px;width:0;height:0;border-left:6px solid transparent;border-right:6px solid transparent;border-top:7px solid #5a6b80"></div>
<div class="a" id="tip" style="left:88.8px;top:321.54px;font-size:10px;font-weight:normal;color:#fff;letter-spacing:0.050px;">Abandoned Cart</div>
<svg class="ico" style="left:161px;top:355px" width="32" height="40" viewBox="0 0 32 40"><path transform="translate(3.2 3) scale(1.1) translate(-3.2 -3)" d="M3.2 3 L3.4 24.8 L8.2 20.3 L12.3 30.2 L16.3 28.5 L12.8 19.3 L19.4 19.2Z" fill="#000" stroke="#fff" stroke-width="4" paint-order="stroke" stroke-linejoin="round" style="filter:drop-shadow(0 0.5px 1px rgba(0,0,0,0.3))"/></svg>
</div>
</body></html>
